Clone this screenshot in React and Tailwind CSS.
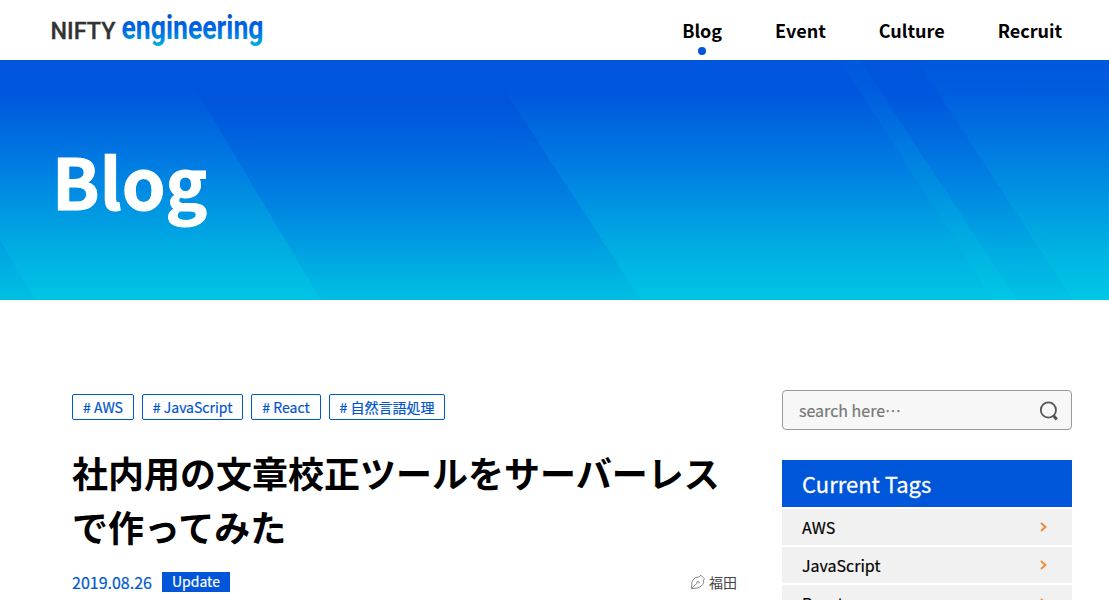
import React from "react";

const NAV = [
  { label: "Blog", active: true },
  { label: "Event" },
  { label: "Culture" },
  { label: "Recruit" },
];
const TAGS = ["AWS", "JavaScript", "React", "自然言語処理"];
const CURRENT = ["AWS", "JavaScript", "React"];

function Logo() {
  return (
    <svg className="block overflow-visible" width="216" height="44" viewBox="0 0 216 44" role="img" aria-label="NIFTY engineering">
      <defs>
        <linearGradient id="logo-fill" gradientUnits="userSpaceOnUse" x1="0" y1="8" x2="0" y2="39">
          <stop offset="0" stopColor="#0055dc" />
          <stop offset="0.4" stopColor="#0066e0" />
          <stop offset="0.72" stopColor="#008ce2" />
          <stop offset="1" stopColor="#00bbd8" />
        </linearGradient>
      </defs>
      <text x="-0.5" y="30.5" fontFamily="Roboto" fontWeight="500" fontSize="23.5" fill="#333" stroke="#333" strokeWidth="0.3" textLength="65" lengthAdjust="spacingAndGlyphs">NIFTY</text>
      <text x="70.5" y="31" fontFamily="Roboto" fontWeight="700" fontSize="32.5" fill="url(#logo-fill)" textLength="142" lengthAdjust="spacingAndGlyphs">engineering</text>
    </svg>
  );
}

function HeroPattern() {
  return (
    <svg className="absolute inset-0 h-full w-full" viewBox="0 0 1109 240" preserveAspectRatio="none" aria-hidden="true">
      <defs>
        <linearGradient id="hero-light" gradientUnits="userSpaceOnUse" x1="0" y1="0" x2="0" y2="240">
          <stop offset="0" stopColor="#0055dc" />
          <stop offset="0.13" stopColor="#0056dd" />
          <stop offset="0.3" stopColor="#006bdf" />
          <stop offset="0.45" stopColor="#007ee3" />
          <stop offset="0.6" stopColor="#0093e2" />
          <stop offset="0.77" stopColor="#00abe2" />
          <stop offset="1" stopColor="#00c5e4" />
        </linearGradient>
        <linearGradient id="hero-bright" gradientUnits="userSpaceOnUse" x1="0" y1="0" x2="0" y2="240">
          <stop offset="0" stopColor="#0058dd" />
          <stop offset="0.15" stopColor="#005fde" />
          <stop offset="0.35" stopColor="#0078e1" />
          <stop offset="0.6" stopColor="#0099e2" />
          <stop offset="0.8" stopColor="#00b3e2" />
          <stop offset="1" stopColor="#00c8e5" />
        </linearGradient>
        <linearGradient id="hero-dark" gradientUnits="userSpaceOnUse" x1="0" y1="0" x2="0" y2="240">
          <stop offset="0" stopColor="#0055dc" />
          <stop offset="0.18" stopColor="#0055dc" />
          <stop offset="0.37" stopColor="#0067df" />
          <stop offset="0.6" stopColor="#0083e2" />
          <stop offset="0.82" stopColor="#00a5e2" />
          <stop offset="1" stopColor="#00bfe2" />
        </linearGradient>
      </defs>
      <rect width="1109" height="240" fill="url(#hero-light)" />
      <polygon points="0,180 35,240 0,240" fill="url(#hero-dark)" opacity="0.7" />
      <polygon points="178,0 485,0 641,240 321,240" fill="url(#hero-dark)" />
      <polygon points="840,0 860,0 1017,240 993,240" fill="url(#hero-bright)" />
      <polygon points="860,0 917,0 1073,240 1017,240" fill="url(#hero-dark)" opacity="0.25" />
      <polygon points="917,0 1109,0 1109,240 1073,240" fill="url(#hero-bright)" />
    </svg>
  );
}

function SearchIcon() {
  return (
    <svg className="mt-[2px]" width="20" height="20" viewBox="0 0 20 20" fill="none" stroke="#555" aria-hidden="true">
      <circle cx="9.4" cy="9" r="7.6" strokeWidth="1.8" />
      <path d="M14.2 14.2L17.8 18.4" strokeWidth="3" />
    </svg>
  );
}

function PenIcon() {
  return (
    <svg width="16" height="16" viewBox="0 0 16 16" fill="none" stroke="#666" strokeWidth="0.8" strokeLinejoin="round" aria-hidden="true">
      <path d="M1.6 14.6L1.8 8.4Q2.6 5.2 5.6 3.6L9.2 2.8L10.8 1.2L14.4 4.8L13.4 6.6Q14.2 8.4 12.8 10.4Q10.8 13.4 7.6 14L1.6 14.6L7.4 8.8" />
      <path d="M6.6 8.8Q6.8 7.2 8.2 7.2Q9.6 7.6 9 9.4" />
    </svg>
  );
}

export default function App() {
  return (
    <div lang="ja" className="h-[600px] overflow-hidden bg-white font-['Noto_Sans_CJK_JP',sans-serif] text-black">
      <header className="flex h-[60px] items-start justify-between pr-[47px] pl-[51px]">
        <div className="pt-2"><Logo /></div>
        <nav className="flex gap-[53px] pt-4 text-[18px] leading-[28px] font-bold">
          {NAV.map((n) => (
            <a key={n.label} className="flex flex-col items-center">
              {n.label}
              {n.active && <span className="mt-[3px] size-2 rounded-full bg-[#0055d8]" />}
            </a>
          ))}
        </nav>
      </header>

      <section className="relative h-[240px] overflow-hidden">
        <HeroPattern />
        <h1 className="relative pt-[66px] pl-[52px] text-[70px] leading-[108px] font-bold text-white [-webkit-text-stroke:1px_white]">Blog</h1>
      </section>

      <main className="flex justify-between pt-[90px] pr-[37px] pl-[72px]">
        <article className="w-[665px]">
          <ul className="flex gap-[7.9px] pt-1">
            {TAGS.map((t) => (
              <li key={t} className="h-[26px] rounded-[2px] border border-[#0059c8] px-[10px] text-[14px] leading-[25px] whitespace-nowrap text-[#0055cc] [-webkit-text-stroke:0.2px]">
                # {t}
              </li>
            ))}
          </ul>
          <h2 className="mt-[25px] text-[36px] leading-[54px] font-bold">
            社内用の文章校正ツールをサーバーレス<br />で作ってみた
          </h2>
          <div className="mt-[18px] flex h-[22px] items-center">
            <time className="text-[16px] leading-[22px] text-[#0059c8] [-webkit-text-stroke:0.2px]">2019.08.26</time>
            <span className="ml-[10px] h-5 w-[68px] bg-[#0055d9] text-center text-[14px] leading-[19px] text-white [-webkit-text-stroke:0.2px]">Update</span>
            <span className="ml-auto flex items-center gap-[3px] text-[14px] leading-[22px] text-[#444]">
              <PenIcon />
              福田
            </span>
          </div>
        </article>

        <aside className="w-[290px]">
          <div className="flex h-10 items-center justify-between rounded-[4px] border border-[#999] bg-[#f7f7f7] pr-3 pl-4 text-[16px] text-[#777] [-webkit-text-stroke:0.2px]">
            <span>search here…</span>
            <SearchIcon />
          </div>
          <h3 className="mt-[30px] h-[47px] bg-[#0056d9] pl-5 text-[22px] leading-[47px] text-white [-webkit-text-stroke:0.3px]">Current Tags</h3>
          <ul className="mt-[2px] flex flex-col gap-[2px]">
            {CURRENT.map((t) => (
              <li key={t} className="flex h-9 items-center justify-between bg-[#f1f1f1] pr-[25px] pl-5 text-[16px] leading-[36px] [-webkit-text-stroke:0.2px]">
                {t}
                <svg width="7" height="10" viewBox="0 0 7 10" fill="none" stroke="#ef8b3b" strokeWidth="2" aria-hidden="true">
                  <path d="M1 1L5.4 5L1 9" />
                </svg>
              </li>
            ))}
          </ul>
        </aside>
      </main>
    </div>
  );
}
